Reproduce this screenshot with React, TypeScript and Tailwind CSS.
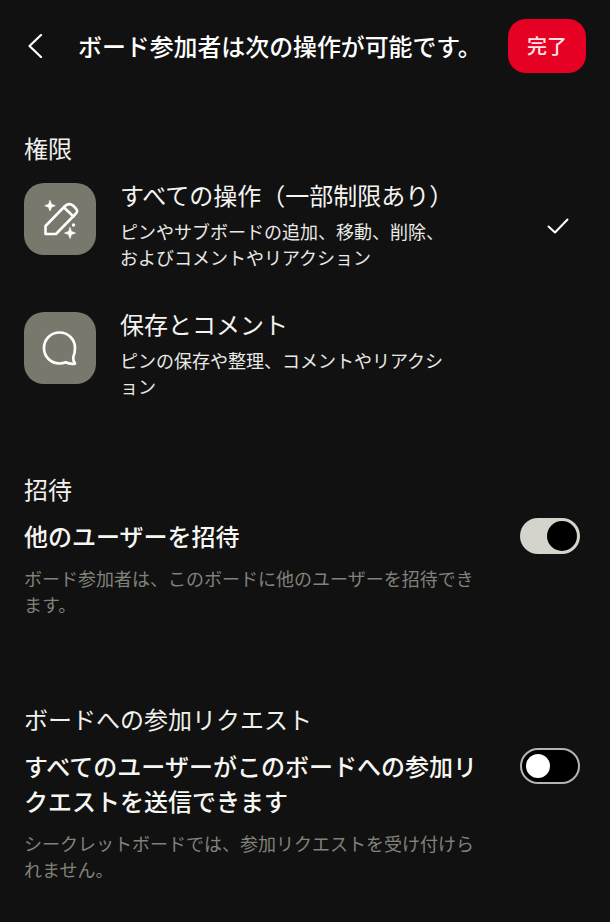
const font = { fontFamily: '"Noto Sans CJK JP", sans-serif' };

function Toggle({ on }: { on: boolean }) {
  return on ? (
    <div className="flex h-[36px] w-[60px] shrink-0 items-center justify-end rounded-full bg-[#d4d3cc] pr-[3px]">
      <div className="h-[30px] w-[30px] rounded-full bg-black" />
    </div>
  ) : (
    <div className="flex h-[36px] w-[60px] shrink-0 items-center rounded-full border-2 border-[#b5b5b0] bg-black pl-[4px]">
      <div className="h-[24px] w-[24px] rounded-full bg-white" />
    </div>
  );
}

function Perm({ icon, title, desc, check }: { icon: React.ReactNode; title: string; desc: string[]; check?: boolean }) {
  return (
    <div className="flex items-start">
      <div className="mt-[1px] flex h-[72px] w-[72px] shrink-0 items-center justify-center rounded-[20px] bg-[#78786c]">{icon}</div>
      <div className="ml-[24px] w-[350px] shrink-0">
        <div className="h-[26px] text-[24px] leading-[26px] text-[#f4f4f2]">{title}</div>
        <div className="mt-[10px] text-[18px] leading-[26px] text-[#e9e9e5]">
          {desc.map((d) => <div key={d}>{d}</div>)}
        </div>
      </div>
      {check && (
        <svg width="24" height="20" viewBox="0 0 24 20" className="ml-[76px] mt-[34px]" fill="none" stroke="#fff" strokeWidth="2" strokeLinecap="round" strokeLinejoin="round">
          <path d="M2.5 10.5 L9 16.5 L21.5 3.5" />
        </svg>
      )}
    </div>
  );
}

export default function App() {
  return (
    <div style={font} className="h-[922px] w-[610px] overflow-hidden bg-[#111111] text-white">
      <div className="h-[19px]" />
      <header className="flex h-[54px] items-center pl-[27px] pr-[24px]">
        <svg width="16" height="24" viewBox="0 0 16 24" fill="none" stroke="#fff" strokeWidth="2.2" strokeLinecap="round" strokeLinejoin="round">
          <path d="M14 1 L2.5 12 L14 23" />
        </svg>
        <h1 className="ml-[35px] flex-1 text-[23.9px] font-medium leading-[30px] whitespace-nowrap">ボード参加者は次の操作が可能です。</h1>
        <div className="flex h-[54px] w-[78px] items-center justify-center rounded-[18px] bg-[#e60023] text-[20px] font-medium text-[#fbe3e6]">完了</div>
      </header>

      <section className="px-[24px] pt-[57px]">
        <h2 className="text-[24px] leading-[36px] text-[#f0f0ec]">権限</h2>
        <div className="mt-[16px] flex flex-col gap-[41px]">
          <Perm
            check
            title="すべての操作（一部制限あり）"
            desc={["ピンやサブボードの追加、移動、削除、", "およびコメントやリアクション"]}
            icon={
              <svg width="48" height="48" viewBox="0 0 48 48" fill="none" stroke="#fff" strokeWidth="2.6" strokeLinejoin="round" strokeLinecap="round">
                <path d="M9.5 39 L9.5 31 L29 11 Q33 7.5 37 10.5 L40 13.5 Q42.5 16.5 39.5 19 L20 39 Z" />
                <path d="M28 12.5 L37.5 21.5" />
                <path d="M14 5.5 L15.5 9.2 L19.3 10.7 L15.5 12.2 L14 16 L12.5 12.2 L8.7 10.7 L12.5 9.2 Z" fill="#fff" strokeWidth="0.6" />
                <path d="M34 32.5 L35.5 36.5 L39.5 38 L35.5 39.5 L34 43.5 L32.5 39.5 L28.5 38 L32.5 36.5 Z" fill="#fff" strokeWidth="0.6" />
                <circle cx="37.5" cy="30" r="1.7" fill="#fff" stroke="none" />
              </svg>
            }
          />
          <Perm
            title="保存とコメント"
            desc={["ピンの保存や整理、コメントやリアクシ", "ョン"]}
            icon={
              <svg width="48" height="48" viewBox="0 0 48 48" fill="none" stroke="#fff" strokeWidth="2.7" strokeLinejoin="round">
                <path d="M23.5 8.5 C14.8 8.5 8 15.3 8 24 C8 32.7 14.8 39.5 23.5 39.5 C25.8 39.5 27.8 39.1 29.6 38.3 C32.6 39.8 35.8 40.2 39 39.6 C37.6 37.8 37 35.8 37.2 33.2 C38.4 30.6 39 27.6 39 24 C39 15.3 32.2 8.5 23.5 8.5 Z" />
              </svg>
            }
          />
        </div>
      </section>

      <section className="pl-[24px] pr-[30px] pt-[72px]">
        <h2 className="text-[24px] leading-[36px] text-[#f0f0ec]">招待</h2>
        <div className="mt-[11px] flex items-center justify-between">
          <div className="text-[24px] font-medium leading-[36px] text-[#f6f6f3]">他のユーザーを招待</div>
          <Toggle on />
        </div>
        <p className="mt-[11px] w-[452px] text-[18px] leading-[26px] text-[#82827a]">ボード参加者は、このボードに他のユーザーを招待できます。</p>
      </section>

      <section className="pl-[24px] pr-[30px] pt-[84px]">
        <h2 className="text-[24px] leading-[36px] text-[#f0f0ec]">ボードへの参加リクエスト</h2>
        <div className="mt-[11px] flex items-start justify-between">
          <div className="w-[456px] text-[24px] font-medium leading-[35px] text-[#f6f6f3]">すべてのユーザーがこのボードへの参加リクエストを送信できます</div>
          <Toggle on={false} />
        </div>
        <p className="mt-[12px] w-[452px] text-[18px] leading-[26px] text-[#82827a]">シークレットボードでは、参加リクエストを受け付けられません。</p>
      </section>
    </div>
  );
}
